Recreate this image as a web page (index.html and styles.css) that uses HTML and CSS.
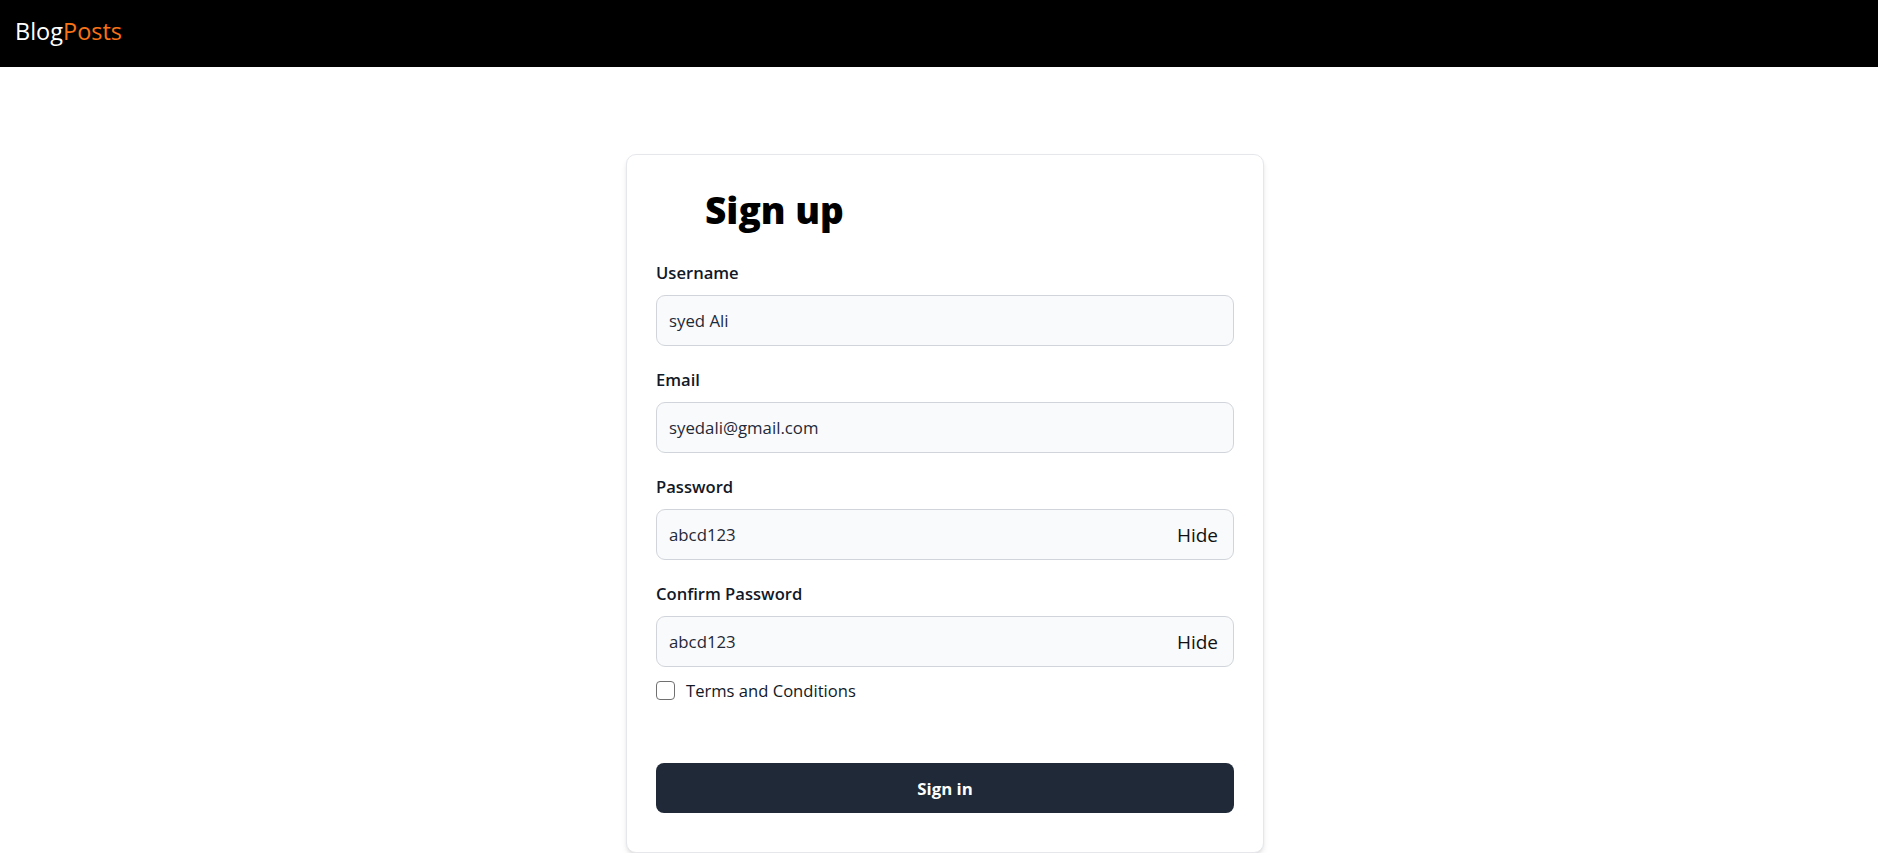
FILE: index.html
```html
<!DOCTYPE html>
<html lang="en">
<head>
<meta charset="utf-8">
<title>BlogPosts - Sign up</title>
<link rel="stylesheet" href="styles.css">
</head>
<body>
<header class="topbar">
  <a class="brand" href="#"><span class="brand-blog">Blog</span><span class="brand-posts">Posts</span></a>
</header>
<main class="page">
  <form class="card">
    <h1 class="title">Sign up</h1>
    <div class="group">
      <label class="label" for="username">Username</label>
      <div class="field"><input id="username" class="input" type="text" value="syed Ali"></div>
    </div>
    <div class="group">
      <label class="label" for="email">Email</label>
      <div class="field"><input id="email" class="input" type="email" value="syedali@gmail.com"></div>
    </div>
    <div class="group">
      <label class="label" for="password">Password</label>
      <div class="field"><input id="password" class="input" type="text" value="abcd123"><button type="button" class="toggle">Hide</button></div>
    </div>
    <div class="group">
      <label class="label" for="confirm">Confirm Password</label>
      <div class="field"><input id="confirm" class="input" type="text" value="abcd123"><button type="button" class="toggle">Hide</button></div>
    </div>
    <label class="terms"><input type="checkbox" class="check"><span>Terms and Conditions</span></label>
    <button type="submit" class="submit">Sign in</button>
  </form>
</main>
</body>
</html>
```
FILE: styles.css
```css
* { box-sizing: border-box; }
html, body { margin: 0; padding: 0; background: #ffffff; }
body { font-family: "Open Sans", "Noto Sans", sans-serif; color: #111827; }

.topbar {
  height: 67px;
  background: #000000;
  display: flex;
  align-items: center;
  padding: 0 0 3px 15px;
}
.brand { text-decoration: none; font-size: 23.5px; font-weight: 400; line-height: 1.36; }
.brand-blog { color: #ffffff; }
.brand-posts { color: #f97316; }

.page {
  display: flex;
  justify-content: center;
  padding-top: 87px;
  padding-left: 12px;
}
.card {
  width: 638px;
  background: #ffffff;
  border: 1px solid #e5e7eb;
  border-radius: 10px;
  box-shadow: 0 4px 6px -1px rgba(0,0,0,0.1), 0 2px 4px -2px rgba(0,0,0,0.1);
  padding: 32px 29px 39px 29px;
  display: flex;
  flex-direction: column;
}
.title {
  margin: 0 0 28px 0;
  padding-left: 49px;
  font-size: 37px;
  line-height: 45px;
  font-weight: 800;
  color: #000000;
}
.group { display: flex; flex-direction: column; margin-bottom: 21px; }
.group:nth-of-type(4) { margin-bottom: 0; }
.label {
  font-size: 16.6px;
  line-height: 25px;
  font-weight: 600;
  color: #111827;
  margin-bottom: 10px;
}
.field {
  height: 51px;
  display: flex;
  align-items: center;
  background: #f9fafb;
  border: 1px solid #d1d5db;
  border-radius: 9px;
  padding: 0 15px 0 12px;
}
.input {
  flex: 1;
  min-width: 0;
  border: 0;
  outline: 0;
  background: transparent;
  padding: 0;
  font-family: inherit;
  font-size: 16.8px;
  color: #1f2937;
}
.toggle {
  border: 0;
  background: transparent;
  padding: 0;
  font-family: inherit;
  font-size: 19px;
  color: #111111;
  cursor: pointer;
}
.terms {
  display: flex;
  align-items: center;
  height: 25px;
  margin-top: 11px;
  font-size: 16.6px;
  font-weight: 500;
  color: #111827;
}
.check {
  appearance: none;
  -webkit-appearance: none;
  width: 19px;
  height: 19px;
  margin: 0 11px 0 0;
  border: 1px solid #707070;
  border-radius: 4px;
  background: #ffffff;
}
.submit {
  margin-top: 60px;
  height: 50px;
  border: 0;
  border-radius: 8px;
  background: #1f2937;
  color: #ffffff;
  font-family: inherit;
  font-size: 16.8px;
  font-weight: 700;
  cursor: pointer;
}
```
